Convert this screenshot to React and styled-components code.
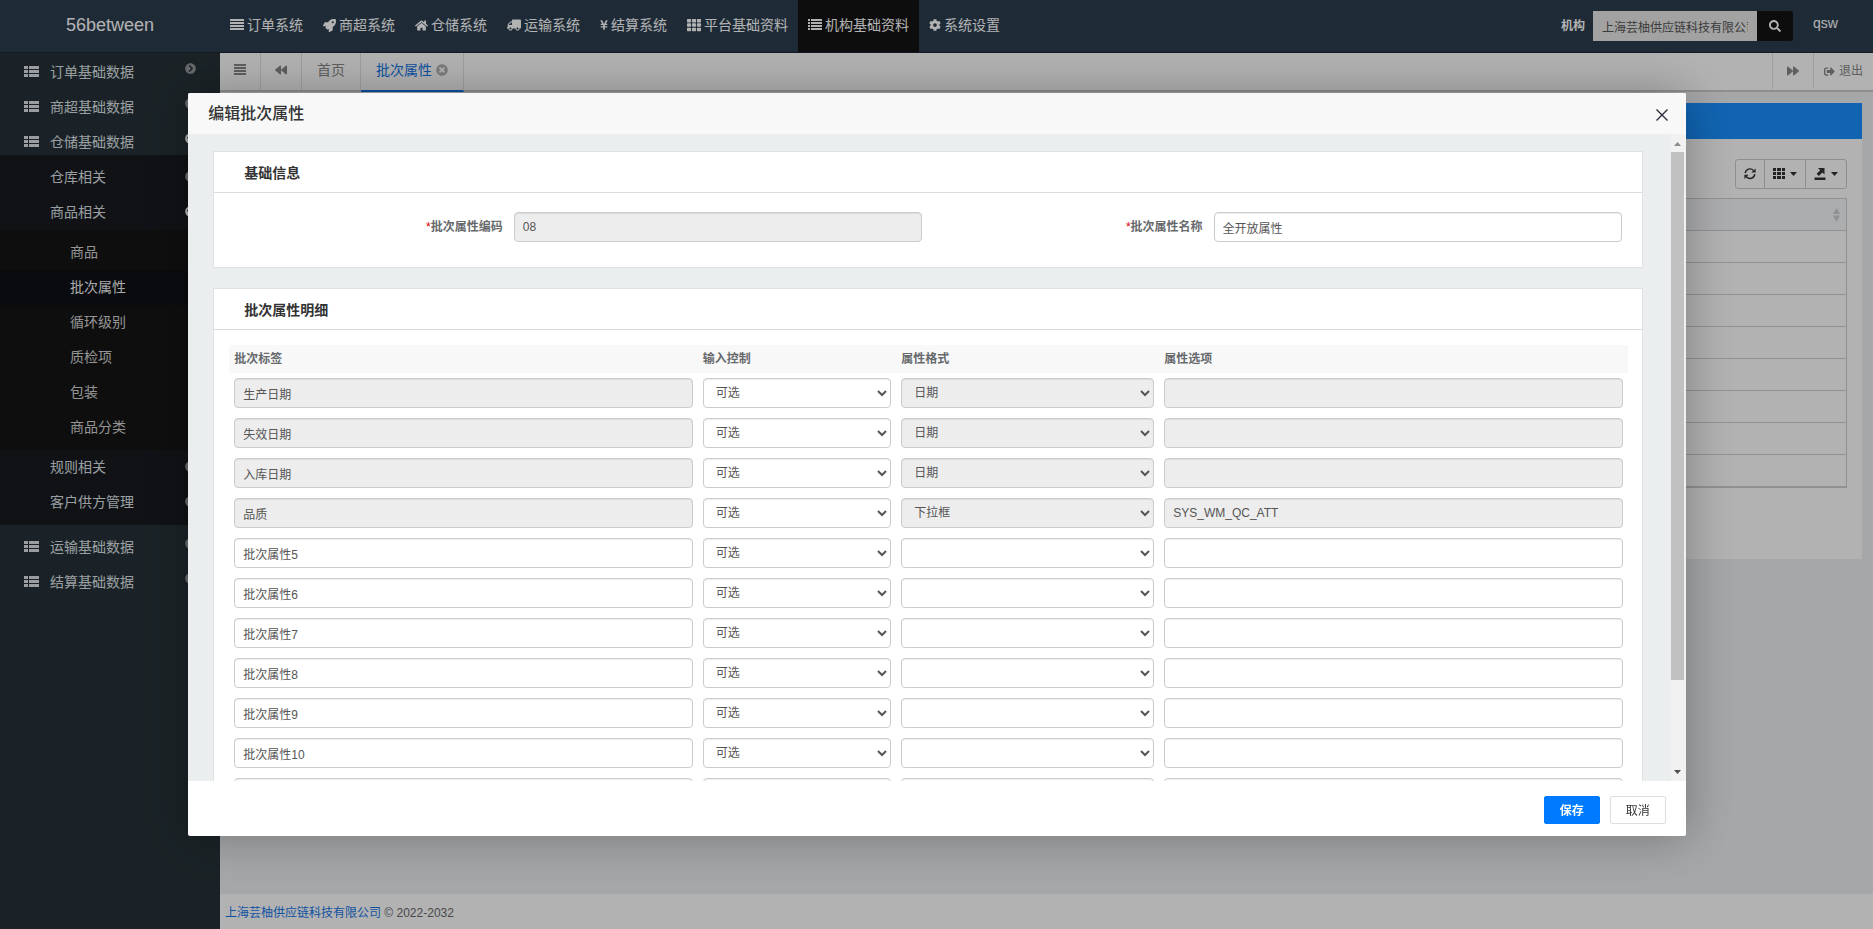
import React from 'react';
import styled, { createGlobalStyle } from 'styled-components';
import {
    FaRocket, FaHome, FaTruck, FaYenSign, FaTh, FaCog, FaSearch,
    FaBackward, FaForward, FaTimesCircle, FaSignOutAlt, FaChevronCircleRight,
    FaChevronCircleDown
} from 'react-icons/fa';

const GlobalStyle = createGlobalStyle`
    * {
        box-sizing: border-box;
    }

    body {
        margin: 0;
        font-family: "Liberation Sans", "Noto Sans CJK SC", sans-serif;
        font-size: 12px;
        line-height: 20px;
        color: #676a6c;
        background-color: #eceff1;
    }

    button, input, select {
        font-family: inherit;
        font-size: inherit;
    }

    ul {
        list-style: none;
        margin: 0;
        padding: 0;
    }

    a {
        color: inherit;
        text-decoration: none;
    }
`;

const Page = styled.div`
    display: flex;
    flex-direction: column;
    height: 100vh;
    overflow: hidden;
`;

/* top bar */

const Header = styled.header`
    display: flex;
    flex: none;
    height: 53px;
    background-color: #2c3e50;
    border-bottom: 1px solid #1c2733;
    color: white;
`;

const Logo = styled.a`
    width: 220px;
    flex: none;
    text-align: center;
    font-size: 18px;
    line-height: 50px;
`;

const TopNav = styled.nav`
    display: flex;
    flex: 1;
`;

const TopLink = styled.a`
    display: flex;
    align-items: center;
    gap: 3px;
    padding: 0 10px 2px;
    font-size: 14px;
    white-space: nowrap;
    background-color: ${props => props.$active ? '#131313' : 'transparent'};

    svg {
        flex: none;
    }
`;

const OrgSearch = styled.form`
    display: flex;
    align-items: center;
    padding-right: 20px;
`;

const OrgLabel = styled.label`
    margin-right: 8px;
    font-weight: bold;
`;

const OrgInput = styled.input`
    width: 164px;
    height: 30px;
    padding: 0 9px;
    border: none;
    background-color: #e8e8e8;
    color: #555;
`;

const OrgButton = styled.button`
    display: flex;
    align-items: center;
    justify-content: center;
    width: 36px;
    height: 30px;
    padding: 0;
    border: none;
    border-radius: 0 3px 3px 0;
    background-color: #131313;
    color: white;
`;

const UserLink = styled.a`
    width: 60px;
    font-size: 14px;
    line-height: 46px;
`;

/* left menu */

const Main = styled.div`
    display: flex;
    flex: 1;
    min-height: 0;
`;

const Sidebar = styled.nav`
    width: 220px;
    flex: none;
    padding-top: 2px;
    background-color: #263238;
    color: #dfe3e6;
    font-size: 14px;
`;

const GroupLink = styled.a`
    display: flex;
    align-items: center;
    height: 30px;
    padding: 3px 24px 0 24px;

    span {
        flex: 1;
        margin-left: 11px;
    }
`;

const Group = styled.li`
    margin-bottom: 5px;
`;

const SubMenu = styled.ul`
    padding: 5px 0;
    background-color: #181a20;
`;

const SubLink = styled.a`
    display: flex;
    align-items: center;
    justify-content: space-between;
    height: 35px;
    padding: 0 24px 2px 50px;
`;

const LeafMenu = styled.ul`
    padding: 5px 0;
    background-color: #151515;
`;

const LeafLink = styled.a`
    display: block;
    padding-left: 70px;
    line-height: 35px;
    color: ${props => props.$active ? '#f4f4f4' : '#d5d5d5'};
    background-color: ${props => props.$active ? '#0e1116' : 'transparent'};
`;

const Arrow = styled.span`
    display: flex;
    color: ${props => props.$open ? 'white' : '#94999c'};

    &&{
        flex: none;
        margin: 0;
        height: ${props => props.$sub ? '12px' : '18px'};
    }
`;

/* tabs and the page behind the dialog */

const Content = styled.div`
    display: flex;
    flex: 1;
    flex-direction: column;
    min-width: 0;
`;

const TabBar = styled.div`
    display: flex;
    flex: none;
    height: 39px;
    background-color: white;
    border-bottom: 2px solid #ccc;
    color: #888;
`;

const TabButton = styled.button`
    display: flex;
    align-items: center;
    justify-content: center;
    width: 41px;
    padding: 0 0 4px;
    border: none;
    border-right: 1px solid #e4e4e4;
    background: none;
    color: #888;
`;

const Tabs = styled.div`
    display: flex;
    flex: 1;
`;

const Tab = styled.a`
    display: flex;
    align-items: center;
    gap: 4px;
    height: 39px;
    padding: 0 15px 3px;
    border-right: 1px solid #e4e4e4;
    border-bottom: 2px solid ${props => props.$active ? '#1074e8' : '#ccc'};
    color: ${props => props.$active ? '#1074e8' : '#888'};
    font-size: 14px;

    svg {
        color: #b4b4b4;
    }
`;

const TabAction = styled.a`
    display: flex;
    align-items: center;
    justify-content: center;
    gap: 4px;
    padding: 0 10px;
    min-width: 41px;
    height: 36px;
    border-left: 1px solid #e4e4e4;
`;

const Scroll = styled.main`
    flex: 1;
    padding: 11px 11px 10px 10px;
    overflow: hidden;
`;

const Panel = styled.section`
    min-height: 456px;
    background-color: white;
    border-top: 36px solid #1890ff;
    padding: 20px 15px;
`;

const Tools = styled.div`
    display: flex;
    justify-content: flex-end;
    margin-bottom: 9px;
`;

const ToolButton = styled.button`
    display: flex;
    align-items: center;
    gap: 5px;
    height: 30px;
    padding: 0 8px;
    margin-left: -1px;
    border: 1px solid #ccc;
    background: white;
    color: #333;

    &:first-child {
        border-radius: 3px 0 0 3px;
    }

    &:last-child {
        border-radius: 0 3px 3px 0;
    }
`;

const List = styled.table`
    width: 100%;
    border-collapse: collapse;
    border: 1px solid #d0d0d0;
    border-bottom-width: 2px;

    th {
        height: 32px;
        padding: 0 5px;
        background-color: #f7f8fa;
        text-align: right;
    }

    th svg {
        display: inline-block;
        vertical-align: middle;
    }

    td {
        height: 32px;
        padding: 0;
        border-top: 1px solid #d0d0d0;
    }
`;

const Footer = styled.footer`
    flex: none;
    height: 35px;
    padding: 9px 5px 0;
    background-color: white;
    line-height: 20px;

    a {
        color: #1878e8;
    }
`;

/* dialog */

const Mask = styled.div`
    position: fixed;
    inset: 0;
    display: flex;
    align-items: center;
    justify-content: center;
    padding-left: 1px;
    background-color: rgba(0, 0, 0, 0.3);
`;

const Dialog = styled.div`
    display: flex;
    flex-direction: column;
    width: 80%;
    height: 80%;
    background-color: white;
    border-radius: 2px;
    box-shadow: 1px 1px 50px rgba(0, 0, 0, 0.3);
`;

const DialogHead = styled.div`
    display: flex;
    flex: none;
    align-items: center;
    justify-content: space-between;
    height: 41px;
    padding: 2px 18px 0 20px;
    background-color: #f8f8f8;
    border-radius: 2px 2px 0 0;
`;

const DialogTitle = styled.h2`
    margin: 0;
    font-size: 16px;
    font-weight: 500;
    color: #333;
`;

const CloseButton = styled.button`
    display: flex;
    padding: 2px 0 0;
    border: none;
    background: none;
    color: #2e2d3c;
`;

const DialogBody = styled.div`
    display: flex;
    flex: 1;
    min-height: 0;
    background-color: #ebeeef;
`;

const FormArea = styled.form`
    flex: 1;
    overflow-y: auto;
    scrollbar-width: none;
    padding: 17px 28px 17px 25px;
`;

const ScrollTrack = styled.div`
    display: flex;
    flex: none;
    flex-direction: column;
    align-items: center;
    width: 15px;
    padding: 7px 2px 6px 0;
    background-color: #f1f1f1;
`;

const ScrollThumb = styled.div`
    flex: 526 0 0;
    width: 13px;
    margin-top: 6px;
    background-color: #c1c1c1;
`;

const ScrollRest = styled.div`
    flex: 90 0 0;
`;

const Card = styled.section`
    margin-bottom: 20px;
    background-color: white;
    border: 1px solid #dfe2e3;
`;

const CardTitle = styled.h5`
    margin: 0;
    padding: 11px 30px 8px;
    border-bottom: 1px solid #d9dcdd;
    font-size: 14px;
    line-height: 21px;
    color: #333;
`;

const Fields = styled.div`
    display: grid;
    grid-template-columns: 1fr 1fr;
    padding: 19px 20px 25px 8px;
`;

const Field = styled.div`
    display: grid;
    grid-template-columns: 5fr 7fr;
    align-items: center;
`;

const FieldLabel = styled.label`
    padding-right: 11px;
    text-align: right;
    font-weight: bold;
    line-height: 28px;

    span {
        color: #d00;
        font-weight: normal;
    }
`;

const Input = styled.input`
    display: block;
    width: 100%;
    height: 30px;
    padding: 1px 8px 0;
    border: 1px solid #ccc;
    border-radius: 4px;
    background-color: white;
    box-shadow: inset 0 1px 1px rgba(0, 0, 0, 0.075);
    color: #555;

    &:read-only {
        background-color: #ededed;
    }
`;

const Select = styled.select`
    display: block;
    width: 100%;
    height: 30px;
    padding: 0 0 0 8px;
    border: 1px solid #ccc;
    border-radius: 4px;
    background-color: white;
    box-shadow: inset 0 1px 1px rgba(0, 0, 0, 0.075);
    color: #555;

    &:disabled {
        background-color: #ededed;
        color: #555;
        opacity: 1;
    }
`;

const TableWrap = styled.div`
    padding: 15px 14px 15px 15px;
`;

const DetailTable = styled.table`
    width: 100%;
    table-layout: fixed;
    border-collapse: collapse;

    th {
        height: 28px;
        padding: 0 5px;
        background-color: #f8f8f9;
        text-align: left;
        font-weight: bold;
    }

    td {
        padding: 5px;
    }
`;

const Col = styled.col`
    width: ${props => props.$width};
`;

const DialogFoot = styled.div`
    display: flex;
    flex: none;
    justify-content: flex-end;
    gap: 10px;
    padding: 15px 20px 12px;
`;

const DialogButton = styled.button`
    width: 56px;
    height: 28px;
    padding: 0 0 1px;
    border: 1px solid ${props => props.$primary ? '#007bff' : '#dedede'};
    border-radius: 2px;
    background-color: ${props => props.$primary ? '#007bff' : 'white'};
    color: ${props => props.$primary ? 'white' : '#333'};
    font-weight: ${props => props.$primary ? 'bold' : 'normal'};
`;

const BarsIcon = ({ width = 14 }) => (
    <svg width={width} height="12" viewBox="0 0 14 12" preserveAspectRatio="none" fill="currentColor">
        <path d="M0 0h14v2H0zM0 3h14v2H0zM0 6h14v2H0zM0 9h14v2H0z" />
    </svg>
);

const ListIcon = () => (
    <svg width="14" height="12" viewBox="0 0 14 12" fill="currentColor">
        <path d="M0 0h2v2H0zM3 0h11v2H3zM0 3h2v2H0zM3 3h11v2H3zM0 6h2v2H0zM3 6h11v2H3zM0 9h2v2H0zM3 9h11v2H3z" />
    </svg>
);

const ThListIcon = () => (
    <svg width="15" height="12" viewBox="0 0 15 12" fill="currentColor">
        <path d="M0 0h4v3H0zM5 0h10v3H5zM0 4h4v3H0zM5 4h10v3H5zM0 8h4v3H0zM5 8h10v3H5z" />
    </svg>
);

const TruckIcon = styled(FaTruck)`
    transform: scaleX(-1);
`;

const RefreshIcon = () => (
    <svg width="12" height="14" viewBox="0 0 12 14" fill="none" stroke="currentColor" strokeWidth="1.4">
        <path d="M1.2 6.2A4.8 4.8 0 0 1 9.6 3.6M10.8 7.2A4.8 4.8 0 0 1 2.4 9.8" />
        <path d="M11.6 1.4v4.2H7.4zM.4 12V7.8h4.2z" fill="currentColor" stroke="none" />
    </svg>
);

const GridIcon = () => (
    <svg width="12" height="12" viewBox="0 0 12 12" fill="currentColor">
        <path d="M0 0h3v3H0zM4 0h4v3H4zM9 0h3v3H9zM0 4h3v3H0zM4 4h4v3H4zM9 4h3v3H9zM0 8h3v3H0zM4 8h4v3H4zM9 8h3v3H9z" />
    </svg>
);

const ExportIcon = () => (
    <svg width="12" height="13" viewBox="0 0 12 13" fill="currentColor">
        <path d="M.5 9.5h11V12H.5zM4 0h6.5v6.5L8.4 4.4 4.8 8 2.6 5.8l3.6-3.6z" />
    </svg>
);

const Caret = () => (
    <svg width="7" height="4" viewBox="0 0 7 4" fill="currentColor">
        <path d="M0 0h7L3.5 4z" />
    </svg>
);

const SortIcon = () => (
    <svg width="9" height="14" viewBox="0 0 9 14" fill="#d0d0d0">
        <path d="M4.5 0L8 6H1zM4.5 14L1 7.5h7z" />
    </svg>
);

const CrossIcon = () => (
    <svg width="12" height="12" viewBox="0 0 12 12" fill="none" stroke="currentColor" strokeWidth="1.4">
        <path d="M.5.5l11 11M11.5.5l-11 11" />
    </svg>
);

const ScrollArrow = ({ down }) => (
    <svg width="7" height="5" viewBox="0 0 7 5" fill={down ? '#505050' : '#8b8b8b'}>
        <path d={down ? 'M0 0h7L3.5 4z' : 'M0 5h7L3.5 1z'} />
    </svg>
);

const topLinks = [
    { text: '订单系统', icon: <BarsIcon /> },
    { text: '商超系统', icon: <FaRocket size={13} /> },
    { text: '仓储系统', icon: <FaHome size={13} /> },
    { text: '运输系统', icon: <TruckIcon size={14} /> },
    { text: '结算系统', icon: <FaYenSign size={12} style={{ width: 8 }} /> },
    { text: '平台基础资料', icon: <FaTh size={14} /> },
    { text: '机构基础资料', icon: <ListIcon />, active: true },
    { text: '系统设置', icon: <FaCog size={12} /> }
];

const menu = [
    { text: '订单基础数据' },
    { text: '商超基础数据' },
    {
        text: '仓储基础数据',
        children: [
            { text: '仓库相关' },
            { text: '商品相关', children: ['商品', '批次属性', '循环级别', '质检项', '包装', '商品分类'] },
            { text: '规则相关' },
            { text: '客户供方管理' }
        ]
    },
    { text: '运输基础数据' },
    { text: '结算基础数据' }
];

const details = [
    { label: '生产日期', format: '日期', option: '', fixed: true },
    { label: '失效日期', format: '日期', option: '', fixed: true },
    { label: '入库日期', format: '日期', option: '', fixed: true },
    { label: '品质', format: '下拉框', option: 'SYS_WM_QC_ATT', fixed: true },
    ...[5, 6, 7, 8, 9, 10, 11, 12].map(n => ({ label: '批次属性' + n, format: '', option: '', fixed: false }))
];

const MenuArrow = ({ open, sub }) => (
    <Arrow $open={open} $sub={sub}>
        {open ? <FaChevronCircleDown size={11} /> : <FaChevronCircleRight size={11} />}
    </Arrow>
);

const SideMenu = () => (
    <Sidebar>
        <ul>
            {menu.map(group => (
                <Group key={group.text}>
                    <GroupLink href="#">
                        <ThListIcon />
                        <span>{group.text}</span>
                        <MenuArrow open={!!group.children} />
                    </GroupLink>
                    {group.children &&
                        <SubMenu>
                            {group.children.map(item => (
                                <li key={item.text}>
                                    <SubLink href="#">
                                        {item.text}
                                        <MenuArrow open={!!item.children} sub />
                                    </SubLink>
                                    {item.children &&
                                        <LeafMenu>
                                            {item.children.map(leaf => (
                                                <li key={leaf}>
                                                    <LeafLink href="#" $active={leaf === '批次属性'}>{leaf}</LeafLink>
                                                </li>
                                            ))}
                                        </LeafMenu>}
                                </li>
                            ))}
                        </SubMenu>}
                </Group>
            ))}
        </ul>
    </Sidebar>
);

const DetailRow = ({ row }) => (
    <tr>
        <td><Input aria-labelledby="col-label" defaultValue={row.label} readOnly={row.fixed} /></td>
        <td>
            <Select aria-labelledby="col-control" defaultValue="可选">
                <option>可选</option>
            </Select>
        </td>
        <td>
            <Select aria-labelledby="col-format" defaultValue={row.format} disabled={row.fixed}>
                <option>{row.format}</option>
            </Select>
        </td>
        <td><Input aria-labelledby="col-option" defaultValue={row.option} readOnly={row.fixed} /></td>
    </tr>
);

const EditDialog = () => (
    <Mask>
        <Dialog role="dialog" aria-labelledby="dialog-title">
            <DialogHead>
                <DialogTitle id="dialog-title">编辑批次属性</DialogTitle>
                <CloseButton type="button"><CrossIcon /></CloseButton>
            </DialogHead>
            <DialogBody>
                <FormArea>
                    <Card>
                        <CardTitle>基础信息</CardTitle>
                        <Fields>
                            <Field>
                                <FieldLabel htmlFor="code"><span>*</span>批次属性编码</FieldLabel>
                                <Input id="code" defaultValue="08" readOnly />
                            </Field>
                            <Field>
                                <FieldLabel htmlFor="name"><span>*</span>批次属性名称</FieldLabel>
                                <Input id="name" defaultValue="全开放属性" />
                            </Field>
                        </Fields>
                    </Card>
                    <Card>
                        <CardTitle>批次属性明细</CardTitle>
                        <TableWrap>
                            <DetailTable>
                                <colgroup>
                                    <Col $width="33.5%" />
                                    <Col $width="14.2%" />
                                    <Col $width="18.8%" />
                                    <Col $width="33.5%" />
                                </colgroup>
                                <thead>
                                    <tr>
                                        <th id="col-label">批次标签</th>
                                        <th id="col-control">输入控制</th>
                                        <th id="col-format">属性格式</th>
                                        <th id="col-option">属性选项</th>
                                    </tr>
                                </thead>
                                <tbody>
                                    {details.map(row => <DetailRow key={row.label} row={row} />)}
                                </tbody>
                            </DetailTable>
                        </TableWrap>
                    </Card>
                </FormArea>
                <ScrollTrack>
                    <ScrollArrow />
                    <ScrollThumb />
                    <ScrollRest />
                    <ScrollArrow down />
                </ScrollTrack>
            </DialogBody>
            <DialogFoot>
                <DialogButton type="button" $primary>保存</DialogButton>
                <DialogButton type="button">取消</DialogButton>
            </DialogFoot>
        </Dialog>
    </Mask>
);

class App extends React.Component {
    render () {
        return(
            <Page>
                <GlobalStyle />
                <Header>
                    <Logo href="#">56between</Logo>
                    <TopNav>
                        {topLinks.map(link => (
                            <TopLink key={link.text} href="#" $active={link.active}>
                                {link.icon}{link.text}
                            </TopLink>
                        ))}
                    </TopNav>
                    <OrgSearch>
                        <OrgLabel htmlFor="org">机构</OrgLabel>
                        <OrgInput id="org" defaultValue="上海芸柚供应链科技有限公司" />
                        <OrgButton type="button"><FaSearch size={12} /></OrgButton>
                    </OrgSearch>
                    <UserLink href="#">qsw</UserLink>
                </Header>
                <Main>
                    <SideMenu />
                    <Content>
                        <TabBar>
                            <TabButton><BarsIcon width={12} /></TabButton>
                            <TabButton><FaBackward size={12} /></TabButton>
                            <Tabs>
                                <Tab href="#">首页</Tab>
                                <Tab href="#" $active>批次属性<FaTimesCircle size={12} /></Tab>
                            </Tabs>
                            <TabAction href="#"><FaForward size={12} /></TabAction>
                            <TabAction href="#"><FaSignOutAlt size={11} />退出</TabAction>
                        </TabBar>
                        <Scroll>
                            <Panel>
                                <Tools>
                                    <ToolButton><RefreshIcon /></ToolButton>
                                    <ToolButton><GridIcon /><Caret /></ToolButton>
                                    <ToolButton><ExportIcon /><Caret /></ToolButton>
                                </Tools>
                                <List>
                                    <thead>
                                        <tr><th><SortIcon /></th></tr>
                                    </thead>
                                    <tbody>
                                        {[1, 2, 3, 4, 5, 6, 7, 8].map(n => <tr key={n}><td /></tr>)}
                                    </tbody>
                                </List>
                            </Panel>
                        </Scroll>
                        <Footer><a href="#">上海芸柚供应链科技有限公司</a> © 2022-2032</Footer>
                    </Content>
                </Main>
                <EditDialog />
            </Page>
        )
    }
}

export default App
